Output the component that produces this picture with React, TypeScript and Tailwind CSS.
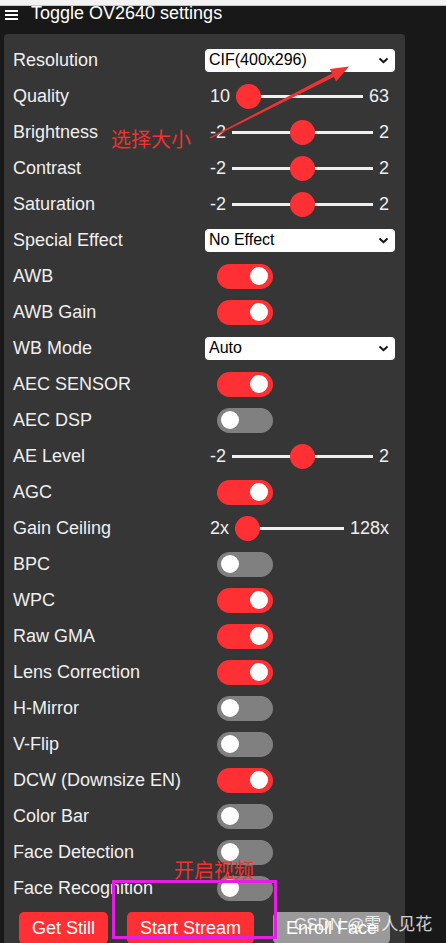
import React from "react";

type Row =
  | { label: string; kind: "select"; value: string }
  | { label: string; kind: "range"; min: string; max: string; pct: number }
  | { label: string; kind: "toggle"; on: boolean };

const rows: Row[] = [
  { label: "Resolution", kind: "select", value: "CIF(400x296)" },
  { label: "Quality", kind: "range", min: "10", max: "63", pct: 0 },
  { label: "Brightness", kind: "range", min: "-2", max: "2", pct: 0.5 },
  { label: "Contrast", kind: "range", min: "-2", max: "2", pct: 0.5 },
  { label: "Saturation", kind: "range", min: "-2", max: "2", pct: 0.5 },
  { label: "Special Effect", kind: "select", value: "No Effect" },
  { label: "AWB", kind: "toggle", on: true },
  { label: "AWB Gain", kind: "toggle", on: true },
  { label: "WB Mode", kind: "select", value: "Auto" },
  { label: "AEC SENSOR", kind: "toggle", on: true },
  { label: "AEC DSP", kind: "toggle", on: false },
  { label: "AE Level", kind: "range", min: "-2", max: "2", pct: 0.5 },
  { label: "AGC", kind: "toggle", on: true },
  { label: "Gain Ceiling", kind: "range", min: "2x", max: "128x", pct: 0 },
  { label: "BPC", kind: "toggle", on: false },
  { label: "WPC", kind: "toggle", on: true },
  { label: "Raw GMA", kind: "toggle", on: true },
  { label: "Lens Correction", kind: "toggle", on: true },
  { label: "H-Mirror", kind: "toggle", on: false },
  { label: "V-Flip", kind: "toggle", on: false },
  { label: "DCW (Downsize EN)", kind: "toggle", on: true },
  { label: "Color Bar", kind: "toggle", on: false },
  { label: "Face Detection", kind: "toggle", on: false },
  { label: "Face Recognition", kind: "toggle", on: false },
];

function Select({ value }: { value: string }) {
  return (
    <div className="flex h-[23px] w-[190px] items-center justify-between rounded-[4px] bg-white pl-[4px] pr-[6px] text-[16px] text-black">
      <span>{value}</span>
      <svg width="11" height="7" viewBox="0 0 11 7">
        <path d="M1.5 1.5 L5.5 5.2 L9.5 1.5" fill="none" stroke="#111" strokeWidth="2" />
      </svg>
    </div>
  );
}

function Range({ min, max, pct }: { min: string; max: string; pct: number }) {
  return (
    <div className="flex flex-1 items-center gap-[6px] pl-[5px] pr-[7px]">
      <span>{min}</span>
      <div className="relative h-[25px] flex-1">
        <div className="absolute left-0 right-0 top-[11px] h-[3px] bg-[#efefef]" />
        <div
          className="absolute top-0 h-[25px] w-[25px] rounded-full bg-[#ff3034]"
          style={{ left: `calc(${pct} * (100% - 25px))` }}
        />
      </div>
      <span>{max}</span>
    </div>
  );
}

function Toggle({ on }: { on: boolean }) {
  return (
    <div
      className={
        on
          ? "ml-[12px] flex h-[25px] w-[56px] items-center justify-end rounded-full bg-[#ff3034] pr-[5px]"
          : "ml-[12px] flex h-[25px] w-[56px] items-center justify-start rounded-full bg-[#808080] pl-[4px]"
      }
    >
      <div className="h-[18px] w-[18px] rounded-full bg-white" />
    </div>
  );
}

export default function App() {
  return (
    <div
      className="relative h-[943px] w-[446px] overflow-hidden bg-[#181818] text-[18px] text-[#efefef]"
      style={{ fontFamily: '"Liberation Sans", Arial, "Noto Sans CJK SC", sans-serif' }}
    >
      <div className="relative z-10 h-[6px] border-b border-[#c9c9c9] bg-[#f2f2f2]" />

      <div className="-mt-[8px] flex h-[28px] items-center gap-[13px] pl-[5px] leading-[28px] text-white">
        <div className="flex w-[13px] flex-col gap-[2px] pt-[6px]">
          <div className="h-[2px] bg-white" />
          <div className="h-[2px] bg-white" />
          <div className="h-[2px] bg-white" />
        </div>
        <span className="pt-[1px]">Toggle OV2640 settings</span>
      </div>

      <div className="ml-[4px] mt-[8px] w-[401px] rounded-[4px] bg-[#363636] px-[9px] pb-[20px] pt-[8px]">
        {rows.map((r) => (
          <div key={r.label} className="flex h-[36px] items-center">
            <div className="w-[192px] shrink-0">{r.label}</div>
            {r.kind === "select" && <Select value={r.value} />}
            {r.kind === "range" && <Range min={r.min} max={r.max} pct={r.pct} />}
            {r.kind === "toggle" && <Toggle on={r.on} />}
          </div>
        ))}

        <div className="mt-[6px] flex justify-between px-[6px]">
          <button className="h-[32px] rounded-[5px] bg-[#ff3034] px-[13px] text-white">Get Still</button>
          <button className="h-[32px] rounded-[5px] bg-[#ff3034] px-[13px] text-white">Start Stream</button>
          <button className="h-[32px] rounded-[5px] bg-[#9a9a9a] px-[13px] text-white">Enroll Face</button>
        </div>
      </div>

      {/* annotations drawn over the screenshot */}
      <svg className="pointer-events-none absolute left-0 top-0" width="446" height="943">
        <polygon
          points="209.6,137.4 332.1,73.4 329.8,69 349,66.5 336.2,81.4 333.9,77 210.4,138.6"
          fill="#f03232"
        />
      </svg>
      <div className="absolute left-[111px] top-[128px] text-[20px] leading-[24px] text-[#f03232]">选择大小</div>
      <div className="absolute left-[174px] top-[859px] text-[20px] leading-[24px] text-[#f03232]">开启视频</div>
      <div className="absolute left-[112px] top-[880px] h-[59px] w-[165px] border-[3px] border-[#e41ee4]" />
      <div className="absolute left-[294px] top-[913px] text-[17px] leading-[24px] text-white/80">CSDN @雪人见花</div>
    </div>
  );
}
